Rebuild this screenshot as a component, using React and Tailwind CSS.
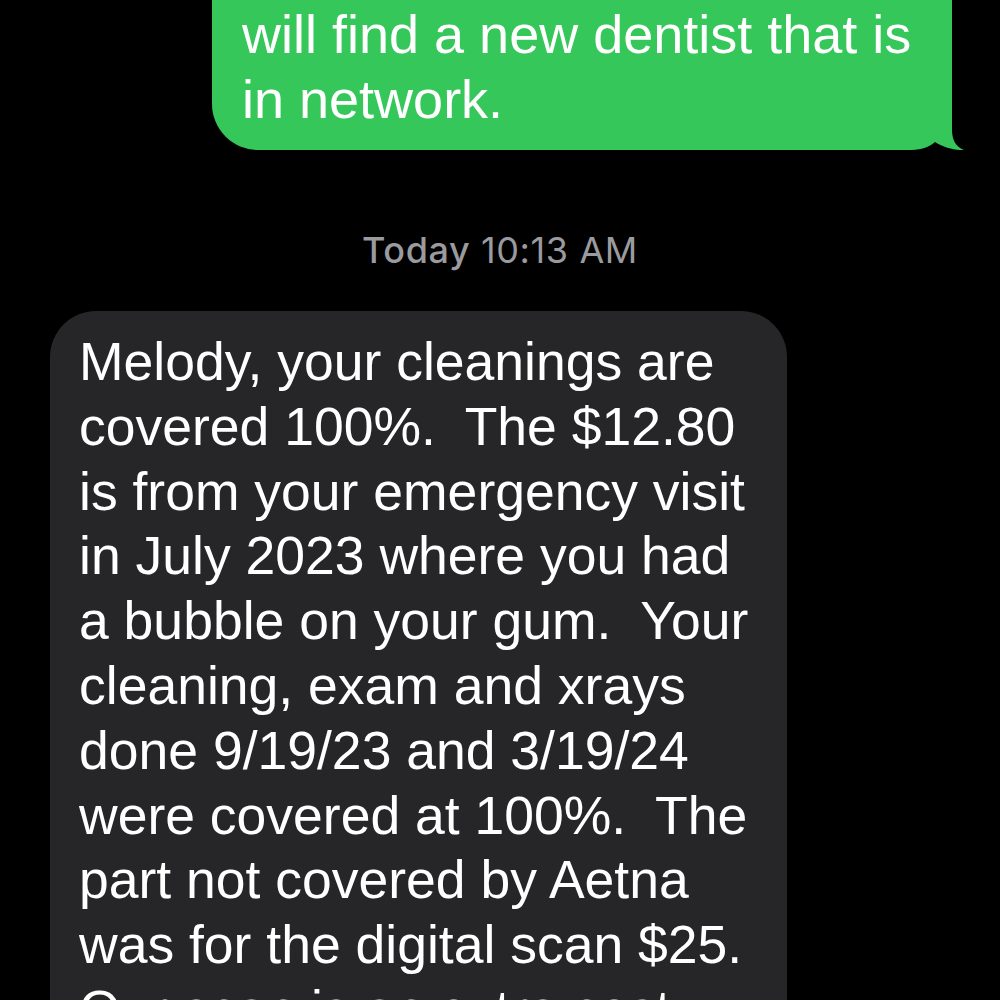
import React from "react";

const sans = "font-['Liberation_Sans',Arial,sans-serif]";

const sentLines = ["will find a new dentist that is", "in network."];

const receivedLines = [
  "Melody, your cleanings are",
  "covered 100%.  The $12.80",
  "is from your emergency visit",
  "in July 2023 where you had",
  "a bubble on your gum.  Your",
  "cleaning, exam and xrays",
  "done 9/19/23 and 3/19/24",
  "were covered at 100%.  The",
  "part not covered by Aetna",
  "was for the digital scan $25.",
  "Our scan is an extra cost",
];

function Tail() {
  return (
    <svg
      className="absolute right-[-12px] bottom-0"
      width="64"
      height="50"
      viewBox="0 0 64 50"
    >
      <path
        d="M0 0 L52 0 L52 30 C52 40 56 47 64 50 C56 50.5 44 48 35 42 C30 46 24 50 10 50 L0 50 Z"
        fill="#35c759"
      />
    </svg>
  );
}

export default function App() {
  return (
    <div className={`w-[1000px] h-[1000px] overflow-hidden bg-black ${sans}`}>
      {/* sent (green) bubble, top cut off */}
      <div className="relative ml-[212px] mt-[-78px] w-[740px] rounded-[46px] bg-[#35c759] pl-[30px] pt-[80px] pb-[18px] text-white">
        {sentLines.map((l) => (
          <div key={l} className="whitespace-pre text-[54px] leading-[65px]">
            {l}
          </div>
        ))}
        <Tail />
      </div>

      {/* timestamp */}
      <div className="mt-[79px] text-center text-[36px] leading-[42px] tracking-[0.6px] text-[#9a9a9f] font-['Inter',sans-serif]">
        <span className="font-medium">Today</span>{" "}
        <span>10:13 AM</span>
      </div>

      {/* received (gray) bubble */}
      <div className="ml-[50px] mt-[40px] w-[737px] rounded-[46px] bg-[#262629] pl-[29px] pt-[19px] pb-[20px] text-white">
        {receivedLines.map((l) => (
          <div key={l} className="whitespace-pre text-[53.5px] leading-[64.8px]">
            {l}
          </div>
        ))}
      </div>
    </div>
  );
}
